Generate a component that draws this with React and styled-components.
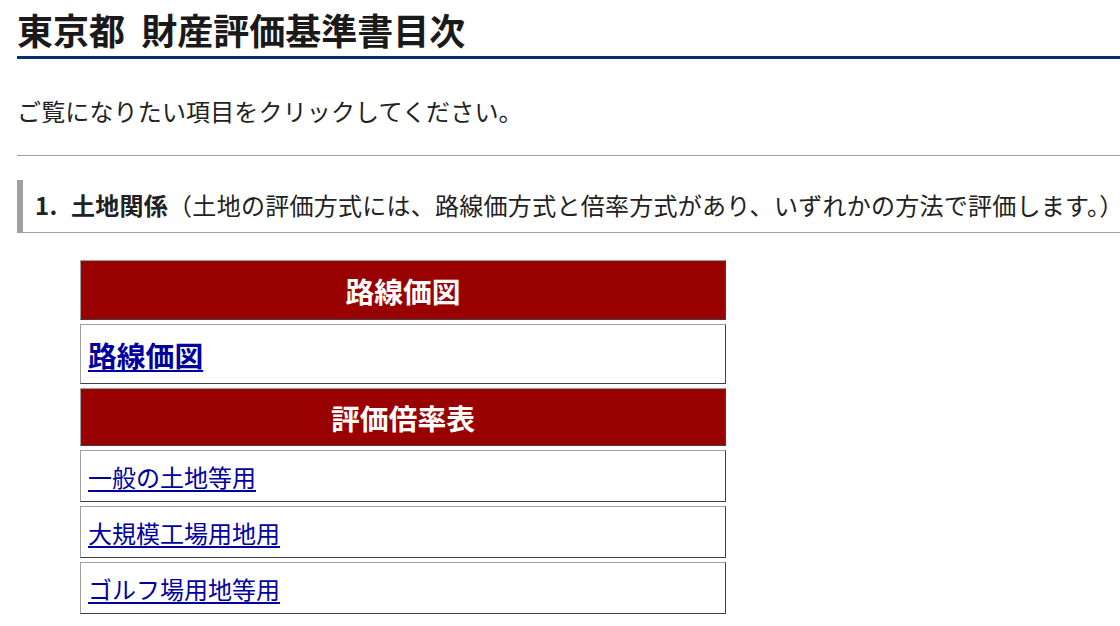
import React from "react";
import styled, { createGlobalStyle } from "styled-components";

const Global = createGlobalStyle`
  html, body { margin: 0; padding: 0; background: #fff; }
  body {
    font-family: "Noto Sans CJK JP", "Noto Sans", sans-serif;
    color: #222;
    overflow: hidden;
  }
`;

const Page = styled.main`
  padding: 3px 0 0 17px;
  width: 1120px;
  box-sizing: border-box;
`;

const Title = styled.h1`
  margin: 0;
  font-size: 36px;
  line-height: 53px;
  font-weight: 700;
  color: #1a1a1a;
  border-bottom: 3px solid #00316b;
  white-space: nowrap;
`;

const Lead = styled.p`
  margin: 34px 0 0;
  font-size: 24px;
  line-height: 36px;
  letter-spacing: 0.15px;
`;

const Rule = styled.hr`
  margin: 26px 0 0;
  border: none;
  height: 1px;
  background: #a0a0a0;
`;

const SectionHead = styled.h2`
  margin: 24px 0 0;
  font-size: 24px;
  line-height: 36px;
  font-weight: 400;
  padding: 7px 0 9px 12px;
  border-left: 6px solid #a0a0a0;
  border-bottom: 1px solid #a0a0a0;
  white-space: nowrap;
  letter-spacing: 0.27px;
`;

const Num = styled.span`
  display: inline-block;
  width: 36px;
  font-weight: 700;
`;

const Strong = styled.strong`
  font-weight: 700;
`;

const Table = styled.div`
  margin: 27px 0 0 63px;
  width: 646px;
  display: flex;
  flex-direction: column;
  gap: 4px;
`;

const Cell = styled.div`
  box-sizing: border-box;
  height: ${(p) => p.$h}px;
  display: flex;
  align-items: center;
  border-style: solid;
  border-width: 1px;
  border-color: #a0a0a0 #404040 #404040 #a0a0a0;
`;

const HeadCell = styled(Cell)`
  justify-content: center;
  background: #990000;
  color: #fff;
  font-weight: 700;
  font-size: 28.8px;
`;

const LinkCell = styled(Cell)`
  padding-left: 7px;
  background: #fff;
`;

const Link = styled.a`
  color: #0000a0;
  text-decoration: underline;
  font-size: ${(p) => (p.$big ? "28.8px" : "24px")};
  font-weight: ${(p) => (p.$big ? 700 : 400)};
  text-underline-offset: 3px;
`;

export default function App() {
  return (
    <>
      <Global />
      <Page>
        <Title>東京都&nbsp;&nbsp;財産評価基準書目次</Title>
        <Lead>ご覧になりたい項目をクリックしてください。</Lead>
        <Rule />
        <SectionHead>
          <Num>1.</Num>
          <Strong>土地関係</Strong>（土地の評価方式には、路線価方式と倍率方式があり、いずれかの方法で評価します。）
        </SectionHead>
        <Table>
          <HeadCell $h={60}>路線価図</HeadCell>
          <LinkCell $h={60}>
            <Link href="#" $big>路線価図</Link>
          </LinkCell>
          <HeadCell $h={58}>評価倍率表</HeadCell>
          <LinkCell $h={52}>
            <Link href="#">一般の土地等用</Link>
          </LinkCell>
          <LinkCell $h={52}>
            <Link href="#">大規模工場用地用</Link>
          </LinkCell>
          <LinkCell $h={52}>
            <Link href="#">ゴルフ場用地等用</Link>
          </LinkCell>
        </Table>
      </Page>
    </>
  );
}
